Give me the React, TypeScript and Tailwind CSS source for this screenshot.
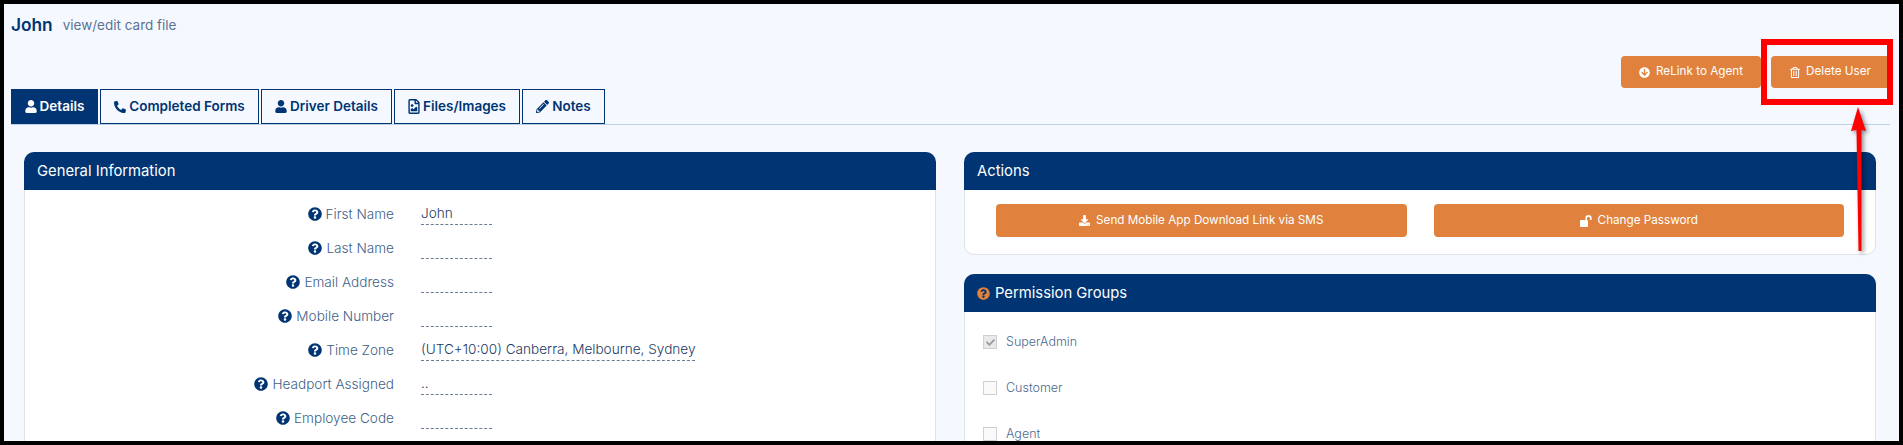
import { FaUser, FaPhone, FaRegFileImage, FaPencilAlt, FaQuestionCircle, FaArrowCircleDown, FaRegTrashAlt, FaDownload, FaCheck } from "react-icons/fa";
import type { ReactNode } from "react";

const tabs = [
  { label: "Details", icon: <FaUser className="h-[13px] w-[12px]" />, width: "w-[87px]", active: true },
  { label: "Completed Forms", icon: <FaPhone className="h-[12px] w-[12px] -scale-x-100" />, width: "w-[159px]" },
  { label: "Driver Details", icon: <FaUser className="h-[13px] w-[12px]" />, width: "w-[131px]" },
  { label: "Files/Images", icon: <FaRegFileImage className="h-[15px] w-[12px]" />, width: "w-[126px]" },
  { label: "Notes", icon: <FaPencilAlt className="h-[13px] w-[13px]" />, width: "w-[83px]" },
];

const fields = [
  { label: "First Name", value: "John" },
  { label: "Last Name", value: "" },
  { label: "Email Address", value: "" },
  { label: "Mobile Number", value: "" },
  { label: "Time Zone", value: "(UTC+10:00) Canberra, Melbourne, Sydney" },
  { label: "Headport Assigned", value: ".." },
  { label: "Employee Code", value: "" },
];

function Card({ title, children }: { title: ReactNode; children: ReactNode }) {
  return (
    <div className="rounded-[10px] border border-[#dfe3e8] bg-white">
      <div className="-mx-px -mt-px flex h-[38px] items-center gap-[5px] rounded-t-[10px] bg-[#003473] px-[13px] text-[14.8px] font-normal text-white">
        {title}
      </div>
      {children}
    </div>
  );
}

function OrangeButton({ icon, label, className }: { icon: ReactNode; label: string; className: string }) {
  return (
    <button className={`flex items-center justify-center gap-[6px] rounded-[4px] bg-[#e0823d] text-[11.7px] font-normal text-white ${className}`}>
      {icon}
      {label}
    </button>
  );
}

function UnlockIcon() {
  return (
    <svg className="h-[12px] w-[12px]" viewBox="0 0 12 12" fill="currentColor">
      <rect x="0" y="5" width="8" height="7" rx="1" />
      <path d="M5.4 5V3.2a3.1 3.1 0 0 1 6.2 0V5h-1.6V3.2a1.5 1.5 0 0 0-3 0V5z" />
    </svg>
  );
}

export default function App() {
  return (
    <div className="h-[445px] overflow-hidden border-4 border-black bg-[#f5f9ff] font-['Inter','Noto_Sans',sans-serif]">
      <div className="relative h-full pl-[7px] pr-[9px]">
        <div className="flex h-[42px] items-center gap-[10px]">
          <span className="text-[17.3px] font-semibold text-[#003473]">John</span>
          <span className="text-[13.5px] text-[#5a7394]">view/edit card file</span>
        </div>

        <div className="flex h-[42px] justify-end gap-[10px] pt-[10px]">
          <OrangeButton icon={<FaArrowCircleDown className="h-[11px] w-[11px]" />} label="ReLink to Agent" className="h-[32px] w-[140px]" />
          <OrangeButton icon={<FaRegTrashAlt className="h-[11px] w-[10px]" />} label="Delete User" className="h-[32px] w-[119px]" />
        </div>

        <div className="mt-[1px] flex h-[36px] gap-[2px] border-b border-[#bcd0e3]">
          {tabs.map((t) => (
            <div
              key={t.label}
              className={`flex h-[35px] items-center justify-center gap-[3px] border border-[#003473] text-[13.5px] font-semibold ${t.width} ${
                t.active ? "bg-[#003473] text-white" : "text-[#003473]"
              }`}
            >
              {t.icon}
              {t.label}
            </div>
          ))}
        </div>

        <div className="mt-[27px] grid grid-cols-2 gap-[28px] pl-[13px] pr-[14px]">
          <Card title="General Information">
            <div className="pt-[7px]">
              {fields.map((f) => (
                <div key={f.label} className="flex h-[34px] items-center">
                  <div className="flex w-[369px] items-center justify-end gap-[4px] text-[13.6px] font-light text-[#3f5f88]">
                    <FaQuestionCircle className="h-[14px] w-[14px] text-[#003473]" />
                    {f.label}
                  </div>
                  <div className="ml-[27px]">
                    <span className="block h-[21px] min-w-[71px] border-b border-dashed border-[#6b7c93] text-[13.6px] font-light leading-[18px] text-[#1d3a66]">
                      {f.value}
                    </span>
                  </div>
                </div>
              ))}
            </div>
          </Card>

          <div className="flex flex-col gap-[19px]">
            <Card title="Actions">
              <div className="grid h-[64px] grid-cols-2 gap-[27px] pl-[31px] pr-[31px] pt-[14px]">
                <OrangeButton icon={<FaDownload className="h-[11px] w-[11px]" />} label="Send Mobile App Download Link via SMS" className="h-[33px]" />
                <OrangeButton icon={<UnlockIcon />} label="Change Password" className="h-[33px]" />
              </div>
            </Card>
            <Card
              title={
                <>
                  <FaQuestionCircle className="h-[13px] w-[13px] text-[#e0823d]" />
                  Permission Groups
                </>
              }
            >
              <div className="flex flex-col gap-[32px] px-[18px] pt-[23px] pb-[20px] text-[12.5px] font-light text-[#4d6a8f]">
                <label className="flex h-[14px] items-center gap-[9px]">
                  <span className="flex h-[14px] w-[14px] items-center justify-center border border-[#cfcfcf] bg-[#e9e9e9] text-[#9a9a9a]">
                    <FaCheck className="h-[9px] w-[9px]" />
                  </span>
                  SuperAdmin
                </label>
                <label className="flex h-[14px] items-center gap-[9px]">
                  <span className="h-[14px] w-[14px] border border-[#cfcfcf] bg-[#fafafa]" />
                  Customer
                </label>
                <label className="flex h-[14px] items-center gap-[9px]">
                  <span className="h-[14px] w-[14px] border border-[#cfcfcf] bg-[#fafafa]" />
                  Agent
                </label>
              </div>
            </Card>
          </div>
        </div>

        {/* annotation: red box and arrow over the delete button */}
        <div className="absolute left-[1757px] top-[35px] h-[66px] w-[132px] border-[6px] border-[#ff0000]" />
        <svg className="absolute left-[1836px] top-[96px] h-[160px] w-[40px]" viewBox="0 0 40 160">
          <path d="M18 7 L26 31 L21.5 30 L21.5 151 L18.5 151 L16.5 30 L11 31 Z" fill="#ff0000" className="drop-shadow-[2px_2px_2px_rgba(0,0,0,0.45)]" />
        </svg>
      </div>
    </div>
  );
}
